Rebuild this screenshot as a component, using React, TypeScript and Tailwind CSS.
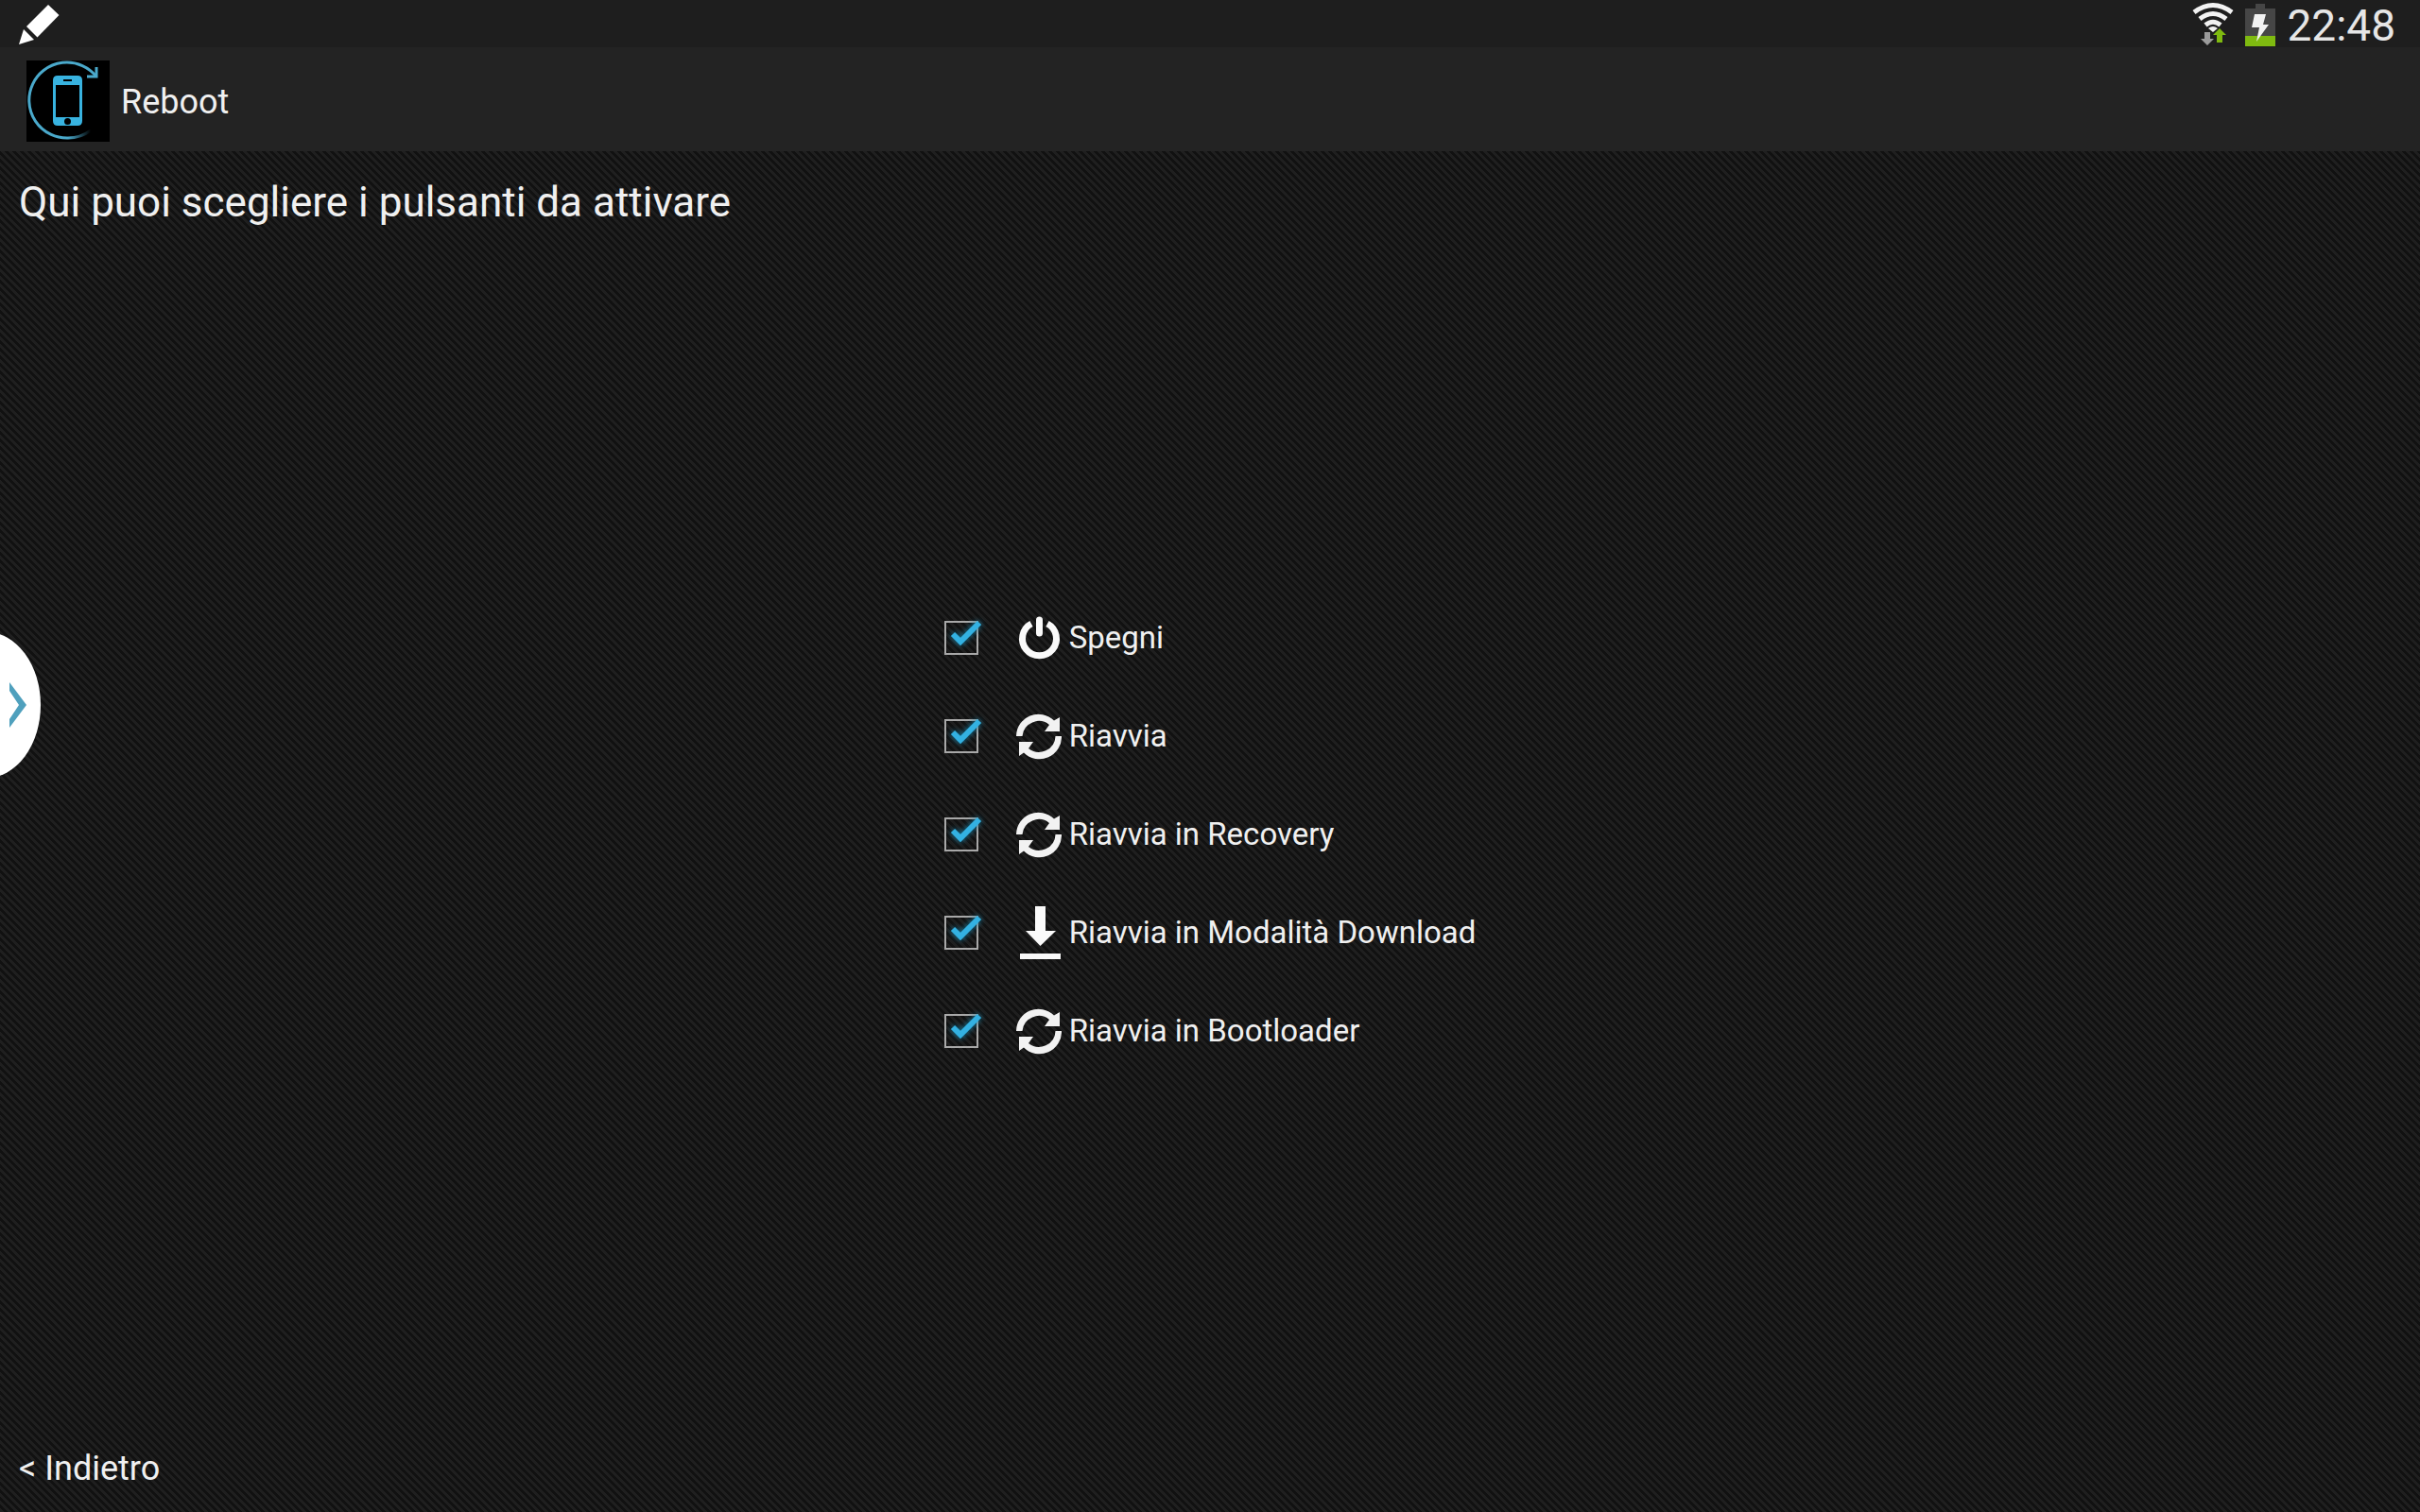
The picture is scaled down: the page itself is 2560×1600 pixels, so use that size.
import { useState } from "react";

type IconName = "power" | "cycle" | "download";

const options: { id: string; label: string; icon: IconName }[] = [
  { id: "spegni", label: "Spegni", icon: "power" },
  { id: "riavvia", label: "Riavvia", icon: "cycle" },
  { id: "recovery", label: "Riavvia in Recovery", icon: "cycle" },
  { id: "download", label: "Riavvia in Modalità Download", icon: "download" },
  { id: "bootloader", label: "Riavvia in Bootloader", icon: "cycle" },
];

function PencilIcon() {
  return (
    <svg className="h-12 w-11" viewBox="0 0 44 48" fill="#fff" aria-hidden="true">
      <path d="M31 4 42.500 15 19.500 38.500 8 27Z" />
      <path d="M5 30 16 41 0 46Z" />
    </svg>
  );
}

function WifiIcon() {
  return (
    <svg className="h-12 w-11" viewBox="0 0 44 48" fill="none" aria-hidden="true">
      <g stroke="#f2f2f2" strokeWidth="5">
        <path d="M2 12Q22-3 42 12" />
        <path d="M8 19Q22 8 36 19" />
        <path d="M14 25.500Q22 19 30 25.500" />
      </g>
      <path d="M17 29Q22 25 27 29L22 33Z" fill="#f2f2f2" />
      <path d="M13 33h6v7h4l-7 7-7-7h4Z" fill="#9b9b9b" />
      <path d="M26 44v-8h-4l7-7 7 7h-4v8Z" fill="#7fba10" />
    </svg>
  );
}

function BatteryIcon() {
  return (
    <svg className="h-12 w-8" viewBox="0 0 32 48" aria-hidden="true">
      <path d="M11 3h10v5h11v39H0V8h11Z" fill="#464646" />
      <path d="M0 37h32v11H0Z" fill="#7fba10" />
      <path d="M10 14h12l-3 11h6L12 43l3-15H7Z" fill="#f2f2f2" />
    </svg>
  );
}

function AppLogo() {
  return (
    <svg className="h-22 w-22" viewBox="0 0 88 88" fill="none" aria-hidden="true">
      <defs>
        <linearGradient id="fade" x1="44" y1="0" x2="68" y2="0" gradientUnits="userSpaceOnUse">
          <stop offset="0" stopColor="#4aa9cb" />
          <stop offset="1" stopColor="#4aa9cb" stopOpacity="0" />
        </linearGradient>
      </defs>
      <path d="M0 0h88v86H0Z" fill="#000" />
      <path d="M74 17A40 40 0 1 0 44 82" stroke="#4aa9cb" strokeWidth="3" />
      <path d="M44 82A40 40 0 0 0 68 74" stroke="url(#fade)" strokeWidth="3" />
      <path d="M74 7V17H64" stroke="#4aa9cb" strokeWidth="3" />
      <path
        fillRule="evenodd"
        d="M33 16H54Q59 16 59 21V64Q59 69 54 69H33Q28 69 28 64V21Q28 16 33 16ZM31 26V60H56V26ZM39 20V22H48V20ZM43.500 61A3.500 3.500 0 1 0 43.500 68A3.500 3.500 0 1 0 43.500 61Z"
        fill="#38b3e0"
      />
    </svg>
  );
}

function OptionIcon({ name }: { name: IconName }) {
  if (name === "power") {
    return (
      <svg className="h-16 w-12" viewBox="0 0 48 64" fill="none" stroke="#fafafa" aria-hidden="true">
        <path d="M16 17A18 18 0 1 0 33 17" strokeWidth="7" />
        <path d="M24.500 13V27" strokeWidth="7" strokeLinecap="round" />
      </svg>
    );
  }
  if (name === "download") {
    return (
      <svg className="h-16 w-12" viewBox="0 0 48 64" fill="#fafafa" aria-hidden="true">
        <path d="M20 4H31V30H42L25.500 46L10 30H20Z" />
        <path d="M4 54H47V60H4Z" />
      </svg>
    );
  }
  return (
    <svg className="h-16 w-12" viewBox="0 0 48 64" fill="#f2f2f2" aria-hidden="true">
      <path d="M0 32A23.500 23.500 0 0 1 40 15.500L46 12V27H30L35 20A17.500 17.500 0 0 0 6.500 32Z" />
      <path d="M48 32A23.500 23.500 0 0 1 8 49.500L3 53V38H18L13 45A17.500 17.500 0 0 0 41.500 32Z" />
    </svg>
  );
}

function OptionRow({ id, label, icon }: { id: string; label: string; icon: IconName }) {
  const [checked, setChecked] = useState(true);
  return (
    <li className="flex h-16 items-center">
      <span className="relative mr-9 flex h-10 w-10 items-center">
        <input
          id={id}
          type="checkbox"
          checked={checked}
          onChange={() => setChecked(!checked)}
          className="h-9 w-9 appearance-none border-2 border-[#a8a8a8]"
        />
        {checked && (
          <svg
            className="pointer-events-none absolute inset-0 h-10 w-10 drop-shadow-[0_0_3px_#1583aa]"
            viewBox="0 0 40 40"
            fill="none"
            aria-hidden="true"
          >
            <path d="M9 16 17 24 37 4" stroke="#33b1e2" strokeWidth="6" />
          </svg>
        )}
      </span>
      <label htmlFor={id} className="flex items-center gap-2 text-[33px] leading-10">
        <OptionIcon name={icon} />
        {label}
      </label>
    </li>
  );
}

export default function App() {
  return (
    <div className="relative flex min-h-screen flex-col bg-[#131313] bg-[linear-gradient(45deg,#1f1f1f_25%,#111111_25%,#111111_50%,#1f1f1f_50%,#1f1f1f_75%,#111111_75%)] bg-size-[8px_8px] font-['Roboto',sans-serif] text-[#f0f0f0]">
      <div className="flex h-[50px] items-center justify-between bg-[#1e1e1e] pr-[26px] pl-5">
        <PencilIcon />
        <div className="flex items-center gap-3">
          <WifiIcon />
          <BatteryIcon />
          <time className="pt-1 text-[46px] leading-[50px] text-[#e6e6e6]">22:48</time>
        </div>
      </div>

      <header className="flex h-[110px] items-center gap-3 bg-[#232323] px-7 pt-1.5">
        <AppLogo />
        <h1 className="text-[36px] leading-10">Reboot</h1>
      </header>

      <main className="flex flex-1 flex-col">
        <h2 className="px-5 py-6 text-[44px] leading-[60px]">Qui puoi scegliere i pulsanti da attivare</h2>
        <div className="flex flex-1 items-center justify-center">
          <ul className="flex flex-col gap-10">
            {options.map((option) => (
              <OptionRow key={option.id} {...option} />
            ))}
          </ul>
        </div>
        <footer className="px-5 pt-9 pb-[26px]">
          <button type="button" className="block text-[36px] leading-10">
            &lt; Indietro
          </button>
        </footer>
      </main>

      <button
        type="button"
        aria-label="Apri pannello"
        className="absolute top-[670px] left-0 h-[152px] w-11 overflow-hidden"
      >
        <svg className="h-full w-full" viewBox="0 0 44 152" aria-hidden="true">
          <ellipse cx="-14" cy="76" rx="57" ry="77" fill="#fff" />
          <path d="M10 52 28 76 10 100V91L20 76 10 61Z" fill="#4fa0bd" />
        </svg>
      </button>
    </div>
  );
}
